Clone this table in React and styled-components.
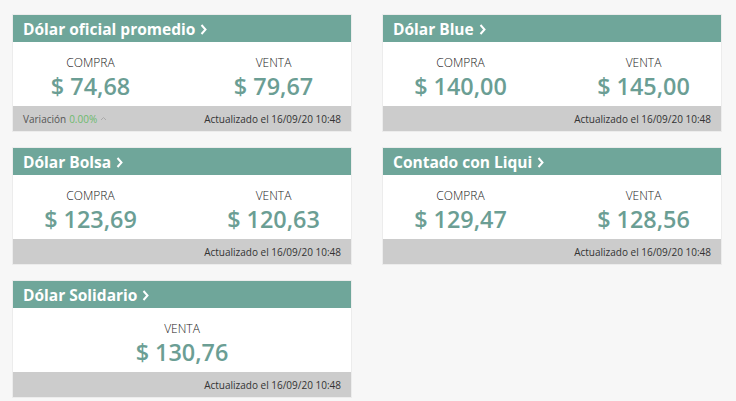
import React from 'react';
import styled, { createGlobalStyle } from 'styled-components';

const GlobalStyle = createGlobalStyle`
  html, body {
    margin: 0;
    padding: 0;
    background: #f7f7f7;
    font-family: "Open Sans", "Liberation Sans", sans-serif;
  }
`;

const Page = styled.div`
  display: grid;
  grid-template-columns: 340px 340px;
  column-gap: 30px;
  row-gap: 15px;
  padding: 14px 0 0 12px;
`;

const Card = styled.div`
  border: 1px solid #ececec;
  background: #fff;
  display: flex;
  flex-direction: column;
`;

const Header = styled.a`
  display: flex;
  align-items: center;
  gap: 5px;
  height: 27px;
  padding: 0 10px;
  background: #6fa69a;
  color: #fff;
  font-weight: 700;
  font-size: 15.5px;
  text-decoration: none;
`;

const Body = styled.div`
  display: grid;
  grid-template-columns: ${p => (p.single ? '155px' : '155px 155px')};
  column-gap: 28px;
  justify-content: center;
  align-content: start;
  height: 64px;
  padding-top: 12px;
  box-sizing: border-box;
`;

const Col = styled.div`
  display: flex;
  flex-direction: column;
  align-items: center;
`;

const Label = styled.span`
  font-size: 12px;
  font-weight: 300;
  color: #222;
  line-height: normal;
  text-transform: uppercase;
`;

const Price = styled.span`
  font-size: 23.4px;
  font-weight: 600;
  color: #6b9e94;
  line-height: normal;
  margin-top: -1px;
`;

const Footer = styled.div`
  display: flex;
  align-items: center;
  justify-content: ${p => (p.split ? 'space-between' : 'flex-end')};
  height: 25px;
  padding: 0 10px;
  background: #cccccc;
  font-size: 10px;
  color: #333;
`;

const Variation = styled.span`
  color: #555;
  display: flex;
  align-items: center;
  gap: 3px;
`;

const Up = styled.span`
  color: #6dba6d;
`;

const Chevron = () => (
  <svg width="7" height="12" viewBox="0 0 7 12">
    <path d="M1.5 2 L5.5 6.5 L1.5 11" fill="none" stroke="#fff" strokeWidth="2" />
  </svg>
);

const Caret = () => (
  <svg width="7" height="5" viewBox="0 0 7 5">
    <path d="M1 4 L3.5 1.5 L6 4" fill="none" stroke="#aaa" strokeWidth="1" />
  </svg>
);

const quotes = [
  { title: 'Dólar oficial promedio', compra: '74,68', venta: '79,67', variation: '0.00%' },
  { title: 'Dólar Blue', compra: '140,00', venta: '145,00' },
  { title: 'Dólar Bolsa', compra: '123,69', venta: '120,63' },
  { title: 'Contado con Liqui', compra: '129,47', venta: '128,56' },
  { title: 'Dólar Solidario', venta: '130,76' },
];

function QuoteCard({ q }) {
  return (
    <Card>
      <Header href="#">
        {q.title}
        <Chevron />
      </Header>
      <Body single={!q.compra}>
        {q.compra && (
          <Col>
            <Label>Compra</Label>
            <Price>$ {q.compra}</Price>
          </Col>
        )}
        <Col>
          <Label>Venta</Label>
          <Price>$ {q.venta}</Price>
        </Col>
      </Body>
      <Footer split={!!q.variation}>
        {q.variation && (
          <Variation>
            Variación <Up>{q.variation}</Up>
            <Caret />
          </Variation>
        )}
        <span>Actualizado el 16/09/20 10:48</span>
      </Footer>
    </Card>
  );
}

export default function App() {
  return (
    <>
      <GlobalStyle />
      <Page>
        {quotes.map(q => (
          <QuoteCard key={q.title} q={q} />
        ))}
      </Page>
    </>
  );
}
